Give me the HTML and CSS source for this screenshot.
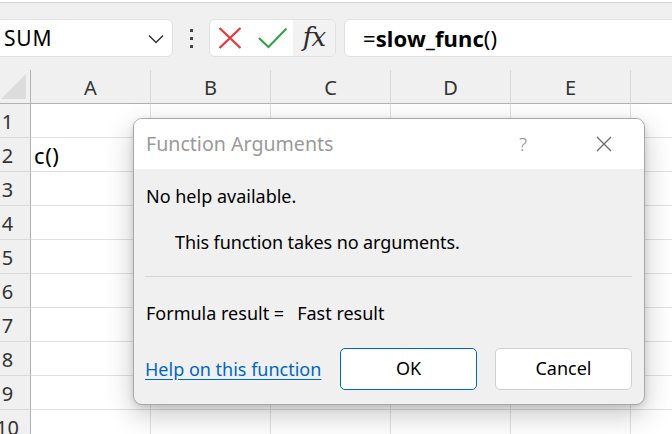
FILE: index.html
```html
<!DOCTYPE html>
<html>
<head>
<meta charset="utf-8">
<link rel="stylesheet" href="styles.css">
</head>
<body>
<div class="ribbon-edge"></div>
<div class="toolbar">
  <div class="namebox">
    <span class="name">SUM</span>
    <svg class="chev" width="16" height="10" viewBox="0 0 16 10"><polyline points="1,1.5 8,8.5 15,1.5" fill="none" stroke="#333" stroke-width="1.5"/></svg>
  </div>
  <div class="dots"><i></i><i></i><i></i></div>
  <div class="fbtns">
    <svg class="fb-x" width="24" height="22" viewBox="0 0 24 22"><path d="M1.5 1 L22.5 21 M22.5 1 L1.5 21" stroke="#e8383d" stroke-width="2.3" fill="none"/></svg>
    <svg class="fb-ok" width="30" height="22" viewBox="0 0 30 22"><polyline points="1,11 10.5,20 28.5,1.5" stroke="#36a046" stroke-width="2.1" fill="none"/></svg>
    <span class="fx">fx</span>
  </div>
  <div class="formula"><span class="eq">=</span><b>slow_func</b>()</div>
</div>
<div class="sheet">
  <div class="hdr corner"><span class="tri"></span></div>
  <div class="hdr col">A</div><div class="hdr col">B</div><div class="hdr col">C</div><div class="hdr col">D</div><div class="hdr col">E</div><div class="hdr col"></div>

  <div class="rh">1</div><div class="c"></div><div class="c"></div><div class="c"></div><div class="c"></div><div class="c"></div><div class="c"></div>
  <div class="rh">2</div><div class="c">c()</div><div class="c"></div><div class="c"></div><div class="c"></div><div class="c"></div><div class="c"></div>
  <div class="rh">3</div><div class="c"></div><div class="c"></div><div class="c"></div><div class="c"></div><div class="c"></div><div class="c"></div>
  <div class="rh">4</div><div class="c"></div><div class="c"></div><div class="c"></div><div class="c"></div><div class="c"></div><div class="c"></div>
  <div class="rh">5</div><div class="c"></div><div class="c"></div><div class="c"></div><div class="c"></div><div class="c"></div><div class="c"></div>
  <div class="rh">6</div><div class="c"></div><div class="c"></div><div class="c"></div><div class="c"></div><div class="c"></div><div class="c"></div>
  <div class="rh">7</div><div class="c"></div><div class="c"></div><div class="c"></div><div class="c"></div><div class="c"></div><div class="c"></div>
  <div class="rh">8</div><div class="c"></div><div class="c"></div><div class="c"></div><div class="c"></div><div class="c"></div><div class="c"></div>
  <div class="rh">9</div><div class="c"></div><div class="c"></div><div class="c"></div><div class="c"></div><div class="c"></div><div class="c"></div>
  <div class="rh">10</div><div class="c"></div><div class="c"></div><div class="c"></div><div class="c"></div><div class="c"></div><div class="c"></div>
</div>

<div class="dialog">
  <div class="titlebar">
    <span class="title">Function Arguments</span>
    <span class="help">?</span>
    <svg class="close" width="16" height="16" viewBox="0 0 16 16"><path d="M1 1 L15 15 M15 1 L1 15" stroke="#6a6a6a" stroke-width="1.3" fill="none"/></svg>
  </div>
  <div class="body">
    <div class="nohelp">No help available.</div>
    <div class="desc">This function takes no arguments.</div>
    <div class="sep"></div>
    <div class="result"><span>Formula result =</span><span class="rv">Fast result</span></div>
    <div class="footer">
      <a class="link" href="#">Help on this function</a>
      <div class="btns">
        <button class="btn primary">OK</button>
        <button class="btn">Cancel</button>
      </div>
    </div>
  </div>
</div>
</body>
</html>
```
FILE: styles.css
```css
* { box-sizing: border-box; }
html, body { margin: 0; padding: 0; }
body {
  width: 672px; height: 434px; overflow: hidden;
  background: #f0f0f0;
  font-family: "Noto Sans", "Open Sans", sans-serif;
  color: #000;
  position: relative;
}
.ribbon-edge {
  height: 3px; margin-left: -1px;
  background: #fff;
  border-bottom: 1px solid #d2d2d2;
  border-bottom-left-radius: 6px;
}
.toolbar {
  height: 67px;
  display: flex; align-items: flex-start;
  padding-top: 16px;
}
.toolbar > * { flex-shrink: 0; }
.namebox {
  margin-left: -10px;
  width: 183px; height: 38px;
  background: #fff;
  border: 1px solid #e0e0e0;
  border-radius: 6px;
  display: flex; align-items: center; justify-content: space-between;
  padding: 0 8px 0 13px;
}
.name { font-size: 21px; letter-spacing: 0.8px; }
.chev { margin-top: 1px; }
.dots {
  width: 36px; height: 38px;
  display: flex; flex-direction: column; align-items: center; justify-content: center;
  gap: 5px;
}
.dots i { display: block; width: 3px; height: 3px; background: #444; }
.fbtns {
  width: 127px; height: 38px;
  background: #fff;
  border: 1px solid #e0e0e0;
  border-radius: 6px;
  display: flex; align-items: center;
  padding-left: 8px;
  overflow: hidden;
}
.fb-x { margin-right: 16px; }
.fb-ok { margin-right: 5px; }
.fx {
  align-self: stretch; flex: 1;
  background: #f2f2f2;
  font-family: "DejaVu Serif", "Liberation Serif", serif;
  font-style: italic;
  font-size: 26px; color: #2e2e2e;
  display: flex; align-items: center; justify-content: center;
  padding-bottom: 2px;
  letter-spacing: -1px;
  border-radius: 0 5px 5px 0;
}
.formula {
  margin-left: 8px; margin-right: -10px;
  flex: 1 0 auto; height: 38px;
  background: #fff;
  border: 1px solid #e0e0e0;
  border-radius: 6px;
  display: flex; align-items: center;
  padding-left: 18px;
  font-size: 22px; letter-spacing: 0.1px;
}
.formula b { font-weight: 700; }

.sheet {
  display: grid;
  grid-template-columns: 31px repeat(6, 120px);
  grid-template-rows: 34px repeat(10, 34px);
  font-size: 20px;
}
.hdr {
  background: #f0f0f0;
  border-bottom: 1px solid #b1b1b1;
}
.corner { border-right: 1px solid #b1b1b1; position: relative; }
.tri {
  position: absolute; left: 1px; top: 4px;
  width: 25px; height: 25px;
  background: #dcdcdc;
  clip-path: polygon(100% 0, 100% 100%, 0 100%);
}
.col {
  border-right: 1px solid #d9d9d9;
  display: flex; align-items: center; justify-content: center;
  color: #333; padding-top: 1px;
}
.rh {
  background: #f0f0f0;
  border-right: 1px solid #b1b1b1;
  border-bottom: 1px solid #dadada;
  color: #333;
  display: flex; align-items: center; justify-content: center;
  padding-right: 15px; padding-top: 1px;
}
.c {
  background: #fff;
  border-right: 1px solid #e1e1e1;
  border-bottom: 1px solid #e1e1e1;
  display: flex; align-items: center;
  padding-left: 3px; padding-top: 1px;
  font-size: 22px; letter-spacing: 0.6px;
}

.dialog {
  position: absolute; left: 133px; top: 118px;
  width: 512px; height: 287px;
  background: #f0f0f0;
  border: 1px solid #a8a8a8;
  border-radius: 9px;
  box-shadow: 0 10px 28px rgba(0,0,0,0.22), 0 2px 6px rgba(0,0,0,0.12);
  overflow: hidden;
}
.titlebar {
  height: 50px; background: #fff;
  display: flex; align-items: center;
  padding-left: 12px;
}
.title { font-size: 19.6px; color: #9a9a9a; flex: 1; padding-bottom: 1px; }
.help { font-size: 19px; color: #8c8c8c; font-weight: 300; margin-right: 69px; }
.close { margin-right: 32px; }
.body {
  padding: 0 12px 0 12px;
  font-size: 18px;
}
.nohelp { margin-top: 14px; height: 26px; line-height: 26px; }
.desc { margin-top: 20px; padding-left: 29px; height: 26px; line-height: 26px; letter-spacing: -0.1px; }
.sep { margin-top: 21px; height: 1px; background: #d5d5d5; margin-left: -1px; }
.result { margin-top: 23px; height: 26px; line-height: 26px; display: flex; }
.rv { margin-left: 13px; }
.footer {
  margin-top: 22px;
  display: flex; align-items: center; justify-content: space-between;
}
.link { color: #0067c0; text-decoration: underline; text-underline-offset: 3px; margin-left: -1px; }
.btns { display: flex; gap: 18px; }
.btn {
  width: 137px; height: 42px;
  font-family: inherit; font-size: 18px; color: #000;
  background: #fff;
  border: 1px solid #d0d0d0;
  border-radius: 5px;
  padding: 0 0 2px;
}
.btn.primary { border-color: #0067c0; }
```
